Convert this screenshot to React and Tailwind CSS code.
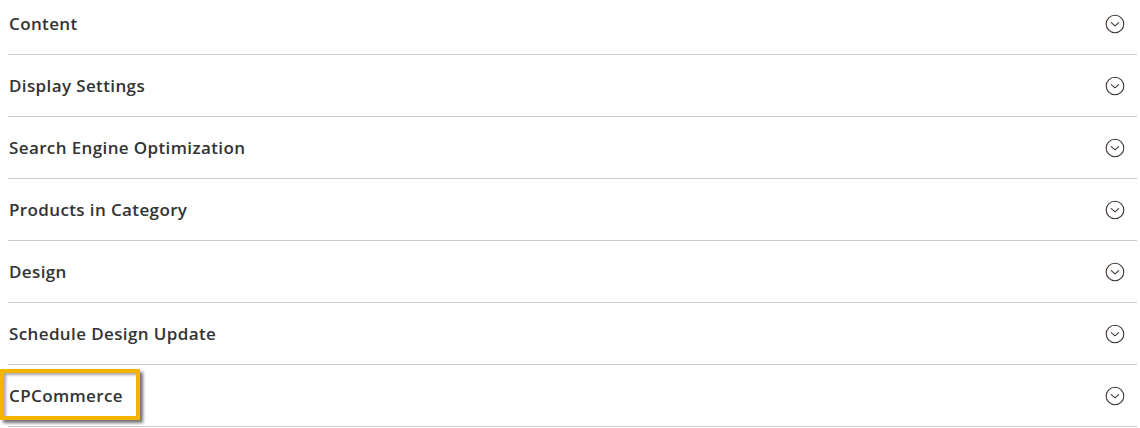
import React from "react";

const rows = [
  "Content",
  "Display Settings",
  "Search Engine Optimization",
  "Products in Category",
  "Design",
  "Schedule Design Update",
  "CPCommerce",
];

function Chevron() {
  return (
    <svg width="20" height="20" viewBox="0 0 20 20" fill="none">
      <circle cx="10" cy="10" r="8.8" stroke="#41362f" strokeWidth="1.1" />
      <path d="M6.3 8.6 L10 11.8 L13.7 8.6" stroke="#41362f" strokeWidth="1.1" strokeLinecap="round" strokeLinejoin="round" />
    </svg>
  );
}

export default function App() {
  return (
    <div className="relative w-[1140px] h-[428px] overflow-hidden bg-white" style={{ fontFamily: '"Open Sans", sans-serif' }}>
      <div className="-mt-[7px] pl-2 pr-[3px]">
        {rows.map((r) => (
          <div key={r} className="relative flex items-center justify-between h-[62px] border-b border-[#cccccc]">
            <span className="pl-px text-[17px] font-semibold text-[#333333] tracking-[0.38px]">{r}</span>
            <span className="pr-[12px] flex items-center">
              <Chevron />
            </span>
          </div>
        ))}
      </div>
      <div className="absolute left-0 top-[369px] w-[140px] h-[51px] border-4 border-[#f5b400] shadow-[3px_3px_3px_rgba(0,0,0,0.55),inset_2px_2px_3px_rgba(0,0,0,0.35)]" />
    </div>
  );
}
